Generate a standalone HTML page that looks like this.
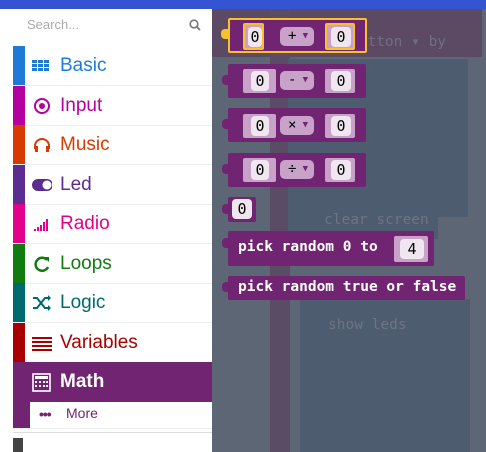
<!DOCTYPE html>
<html><head><meta charset="utf-8"><style>
*{margin:0;padding:0;box-sizing:border-box}
body{width:486px;height:452px;overflow:hidden;background:#fff;font-family:"Liberation Sans",sans-serif;position:relative}
.top{position:absolute;left:0;top:0;width:486px;height:9px;background:#3454d1}
.ws{position:absolute;left:212px;top:9px;width:274px;height:443px;background:#5d6674;overflow:hidden}
.sb{position:absolute;left:13px;top:9px;width:199px;height:443px;background:#fff}
.search{position:absolute;left:27px;top:17px;font-size:13px;color:#aaa}
.row{position:absolute;left:13px;width:199px;height:40px;border-bottom:1px solid #eef0f0}
.bar{position:absolute;left:0;top:0;width:12px;height:100%}
.lbl{position:absolute;left:47px;top:9px;font-size:19px}
.ic{position:absolute;left:19px;top:10px;width:20px;height:20px}
.blk{position:absolute;background:#712472;border-radius:2px}
.nub{position:absolute;width:7px;height:10px;background:#712472;border-radius:4px 0 0 4px}
.slot{position:absolute;background:#c8a2c9;border-radius:2px}
.num{position:absolute;background:#efe6ef;border-radius:4px;font-family:"DejaVu Sans Mono",monospace;font-size:15px;color:#000;text-align:center;line-height:20px}
.op{position:absolute;background:#c8a2c9;border-radius:5px;height:19px;font-family:"DejaVu Sans Mono",monospace;font-size:14px;color:#000;line-height:19px;padding-left:8px}
.op i{position:absolute;right:6px;top:0;font-style:normal;font-size:9px;color:#712472}
.t{position:absolute;color:#fff;font-family:"DejaVu Sans Mono",monospace;font-size:14.5px;font-weight:bold;white-space:pre}
.f{position:absolute}
</style></head><body>
<div class="top"></div>
<div class="ws">
 <div class="f" style="left:-30px;top:0;width:300px;height:48px;background:#5c4a64"></div>
 <div class="f" style="left:58px;top:0;width:20px;height:443px;background:#5b4c66"></div>
 <div class="f" style="left:76px;top:50px;width:180px;height:158px;background:#4d5c6e"></div>
 <div class="f" style="left:76px;top:208px;width:150px;height:22px;background:#4d5c6e"></div>
 <div class="f" style="left:88px;top:290px;width:170px;height:160px;background:#4d5c6e"></div>
 <div class="t" style="left:138px;top:25px;color:#6d7080;font-weight:normal">button ▾ by</div>
 <div class="t" style="left:112px;top:203px;color:#6d7585;font-weight:normal">clear screen</div>
 <div class="t" style="left:116px;top:308px;color:#6d7585;font-weight:normal">show leds</div>
</div>
<div class="sb"></div>
<div class="search">Search...</div>
<svg style="position:absolute;left:189px;top:19px" width="12" height="12" viewBox="0 0 12 12"><circle cx="5" cy="5" r="3.8" fill="none" stroke="#777" stroke-width="1.6"/><path d="M8 8l3 3" stroke="#777" stroke-width="1.8"/></svg>

<div class="row" style="top:46px"><div class="bar" style="background:#1e7ad6"></div>
<svg class="ic" viewBox="0 0 20 20"><g fill="#1e7ad6"><rect x="0" y="4" width="5" height="3"/><rect x="6" y="4" width="5" height="3"/><rect x="12" y="4" width="5" height="3"/><rect x="0" y="8" width="5" height="3"/><rect x="6" y="8" width="5" height="3"/><rect x="12" y="8" width="5" height="3"/><rect x="0" y="12" width="5" height="3"/><rect x="6" y="12" width="5" height="3"/><rect x="12" y="12" width="5" height="3"/></g></svg>
<div class="lbl" style="color:#1e7ad6">Basic</div></div>
<div class="row" style="top:86px"><div class="bar" style="background:#b4009e"></div>
<svg class="ic" viewBox="0 0 20 20"><circle cx="10" cy="10" r="7" fill="none" stroke="#b4009e" stroke-width="2"/><circle cx="10" cy="10" r="3" fill="#b4009e"/></svg>
<div class="lbl" style="color:#b4009e">Input</div></div>
<div class="row" style="top:125px"><div class="bar" style="background:#d83b01"></div>
<svg class="ic" viewBox="0 0 20 20"><path d="M3 14V11a7 7 0 0 1 14 0v3" fill="none" stroke="#d83b01" stroke-width="2"/><rect x="3" y="11" width="3" height="6" fill="#d83b01"/><rect x="14" y="11" width="3" height="6" fill="#d83b01"/></svg>
<div class="lbl" style="color:#d83b01">Music</div></div>
<div class="row" style="top:165px"><div class="bar" style="background:#5c2d91"></div>
<svg class="ic" viewBox="0 0 20 20"><rect x="0" y="4" width="21" height="12" rx="6" fill="#5c2d91"/><circle cx="15" cy="10" r="4.5" fill="#fff"/></svg>
<div class="lbl" style="color:#5c2d91">Led</div></div>
<div class="row" style="top:204px"><div class="bar" style="background:#e3008c"></div>
<svg class="ic" viewBox="0 0 20 20"><g fill="#e3008c"><rect x="2" y="15" width="2" height="2"/><rect x="5" y="13" width="2" height="4"/><rect x="8" y="11" width="2" height="6"/><rect x="11" y="8" width="2" height="9"/><rect x="14" y="5" width="2" height="12"/></g></svg>
<div class="lbl" style="color:#e3008c">Radio</div></div>
<div class="row" style="top:244px"><div class="bar" style="background:#107c10"></div>
<svg class="ic" viewBox="0 0 20 20"><path d="M15 6A6.5 6.5 0 1 0 16 13" fill="none" stroke="#107c10" stroke-width="2.5"/><path d="M12 3h5v5z" fill="#107c10"/></svg>
<div class="lbl" style="color:#107c10">Loops</div></div>
<div class="row" style="top:283px"><div class="bar" style="background:#006970"></div>
<svg class="ic" viewBox="0 0 20 20"><path d="M1 5h4l8 10h4M1 15h4l8-10h4" fill="none" stroke="#006970" stroke-width="2"/><path d="M16 2l3 3-3 3zM16 12l3 3-3 3z" fill="#006970"/></svg>
<div class="lbl" style="color:#006970">Logic</div></div>
<div class="row" style="top:323px"><div class="bar" style="background:#a80000"></div>
<svg class="ic" viewBox="0 0 20 20"><g fill="#a80000"><rect x="0" y="4" width="20" height="2"/><rect x="0" y="8" width="20" height="2"/><rect x="0" y="12" width="20" height="2"/><rect x="0" y="16" width="20" height="2"/></g></svg>
<div class="lbl" style="color:#a80000">Variables</div></div>
<div class="row" style="top:362px;background:#712472;border:none"><div class="bar" style="background:#712472"></div>
<svg class="ic" viewBox="0 0 20 20"><rect x="1" y="2" width="17" height="17" fill="none" stroke="#fff" stroke-width="1.6"/><rect x="3" y="4" width="13" height="3" fill="#fff"/><g fill="#fff"><rect x="3" y="9" width="2" height="2"/><rect x="7" y="9" width="2" height="2"/><rect x="11" y="9" width="2" height="2"/><rect x="14" y="9" width="2" height="2"/><rect x="3" y="13" width="2" height="2"/><rect x="7" y="13" width="2" height="2"/><rect x="11" y="13" width="2" height="2"/><rect x="14" y="13" width="2" height="2"/></g></svg>
<div class="lbl" style="color:#fff;font-weight:bold">Math</div></div>
<div class="row" style="top:401px;height:28px"><div class="bar" style="background:#712472;width:17px"></div>
<div style="position:absolute;left:26px;top:5px;color:#712472;font-size:14px;font-weight:bold;letter-spacing:-1px">•••</div>
<div style="position:absolute;left:53px;top:4px;color:#712472;font-size:14px">More</div></div>
<div style="position:absolute;left:13px;top:432px;width:199px;height:1px;background:#ddd"></div>
<div style="position:absolute;left:13px;top:438px;width:10px;height:14px;background:#444"></div>

<div class="blk" style="left:228px;top:18px;width:139px;height:35px;border:2px solid #f6c12b"></div>
<div class="nub" style="left:221px;top:29px;background:#f6c12b"></div>
<div class="slot" style="left:243px;top:23px;width:21px;height:27px;border:2px solid #f6c12b"></div>
<div class="num" style="left:248px;top:27px;width:14px">0</div>
<div class="op" style="left:280px;top:27px;width:34px">+<i>▼</i></div>
<div class="slot" style="left:325px;top:23px;width:30px;height:27px;border:2px solid #f6c12b"></div>
<div class="num" style="left:331px;top:27px;width:20px">0</div>

<div class="blk" style="left:228px;top:64px;width:138px;height:34px"></div>
<div class="blk" style="left:228px;top:108px;width:138px;height:34px"></div>
<div class="blk" style="left:228px;top:153px;width:138px;height:34px"></div>
<div class="blk" style="left:228px;top:197px;width:28px;height:25px"></div>
<div class="blk" style="left:228px;top:231px;width:206px;height:35px"></div>
<div class="blk" style="left:228px;top:276px;width:237px;height:24px"></div>
<div class="nub" style="left:222px;top:75px"></div>
<div class="nub" style="left:222px;top:119px"></div>
<div class="nub" style="left:222px;top:164px"></div>
<div class="nub" style="left:222px;top:204px"></div>
<div class="nub" style="left:222px;top:238px"></div>
<div class="nub" style="left:222px;top:282px"></div>

<div class="slot" style="left:243px;top:69px;width:33px;height:24px"></div><div class="num" style="left:251px;top:71px;width:18px">0</div>
<div class="op" style="left:280px;top:71px;width:34px">-<i>▼</i></div>
<div class="slot" style="left:325px;top:69px;width:30px;height:24px"></div><div class="num" style="left:331px;top:71px;width:20px">0</div>

<div class="slot" style="left:243px;top:114px;width:33px;height:24px"></div><div class="num" style="left:251px;top:116px;width:18px">0</div>
<div class="op" style="left:280px;top:116px;width:34px">×<i>▼</i></div>
<div class="slot" style="left:325px;top:114px;width:30px;height:24px"></div><div class="num" style="left:331px;top:116px;width:20px">0</div>

<div class="slot" style="left:243px;top:158px;width:33px;height:24px"></div><div class="num" style="left:251px;top:160px;width:18px">0</div>
<div class="op" style="left:280px;top:160px;width:34px">÷<i>▼</i></div>
<div class="slot" style="left:325px;top:158px;width:30px;height:24px"></div><div class="num" style="left:331px;top:160px;width:20px">0</div>

<div class="num" style="left:232px;top:199px;width:20px">0</div>

<div class="t" style="left:238px;top:239px">pick random 0 to</div>
<div class="slot" style="left:394px;top:236px;width:34px;height:26px"></div><div class="num" style="left:400px;top:239px;width:24px">4</div>
<div class="t" style="left:238px;top:279px">pick random true or false</div>
</body></html>
